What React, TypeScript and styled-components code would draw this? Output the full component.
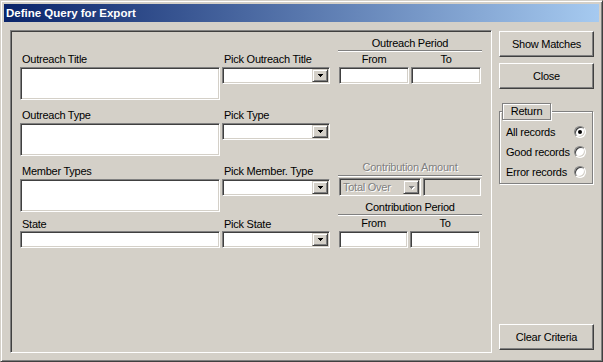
import { Fragment } from 'react';
import styled, { createGlobalStyle } from 'styled-components';

const GlobalStyle = createGlobalStyle`
  body {
    margin: 0;
    background: #d4d0c8;
    font-family: 'Liberation Sans', Arial, sans-serif;
    font-size: 11px;
    letter-spacing: -0.25px;
    color: #000;
  }
`;

const Window = styled.div`
  width: 603px;
  height: 362px;
  box-sizing: border-box;
  display: flex;
  flex-direction: column;
  background: #d4d0c8;
  border: 1px solid;
  border-color: #d4d0c8 #404040 #404040 #d4d0c8;
  box-shadow: inset 1px 1px #fff, inset -1px -1px #808080;
  padding: 3px;
`;

const TitleBar = styled.div`
  height: 18px;
  line-height: 18px;
  padding-left: 2px;
  background: linear-gradient(to right, #0a246a, #a6caf0);
  color: #fff;
  font-weight: bold;
  font-size: 11.5px;
  letter-spacing: 0;
`;

const Body = styled.div`
  flex: 1;
  display: flex;
  padding: 8px 4px 5px 6px;
`;

const Panel = styled.div`
  width: 482px;
  box-sizing: border-box;
  display: flex;
  align-items: flex-start;
  padding: 5px 0 0 9px;
  border: 1px solid;
  border-color: #808080 #fff #fff #808080;
  box-shadow: inset 1px 1px #404040, inset -1px -1px #d4d0c8;
`;

const FieldGrid = styled.div`
  display: grid;
  grid-template-columns: 200px 108px;
  grid-template-rows: 56px 56px 53px auto;
  column-gap: 2px;
  padding-top: 16px;
`;

const Cell = styled.div`
  display: flex;
  flex-direction: column;
`;

const Label = styled.div<{ $tight?: boolean }>`
  height: 14px;
  line-height: 14px;
  padding-left: 2px;
  margin-bottom: ${(p) => (p.$tight ? 0 : 1)}px;
  white-space: nowrap;
`;

const Sunken = styled.div<{ $h: number; $w?: number; $disabled?: boolean }>`
  box-sizing: border-box;
  height: ${(p) => p.$h}px;
  width: ${(p) => (p.$w ? `${p.$w}px` : 'auto')};
  padding: 1px;
  display: flex;
  justify-content: flex-end;
  align-items: stretch;
  background: ${(p) => (p.$disabled ? '#d4d0c8' : '#fff')};
  border: 1px solid;
  border-color: #808080 #fff #fff #808080;
  box-shadow: inset 1px 1px #404040, inset -1px -1px #d4d0c8;
`;

const DropButton = styled.div<{ $disabled?: boolean }>`
  width: 16px;
  box-sizing: border-box;
  display: flex;
  align-items: center;
  justify-content: center;
  background: #d4d0c8;
  border: 1px solid;
  border-color: #d4d0c8 #404040 #404040 #d4d0c8;
  box-shadow: inset 1px 1px #fff, inset -1px -1px #808080;
  color: ${(p) => (p.$disabled ? '#808080' : '#000')};
  svg {
    filter: ${(p) => (p.$disabled ? 'drop-shadow(1px 1px 0 #fff)' : 'none')};
  }
`;

const ComboText = styled.div`
  flex: 1;
  padding-left: 2px;
  line-height: 14px;
  color: #808080;
  text-shadow: 1px 1px 0 #fff;
`;

const Arrow = () => (
  <svg width="5" height="3" viewBox="0 0 5 3" shapeRendering="crispEdges">
    <path d="M0 0h5v1h-1v1h-1v1h-1v-1h-1v-1h-1z" fill="currentColor" />
  </svg>
);

const Combo = ({ w, h = 17, text, disabled }: { w?: number; h?: number; text?: string; disabled?: boolean }) => (
  <Sunken $h={h} $w={w} $disabled={disabled}>
    {text && <ComboText>{text}</ComboText>}
    <DropButton $disabled={disabled}>
      <Arrow />
    </DropButton>
  </Sunken>
);

const Periods = styled.div`
  width: 144px;
  margin-left: 8px;
  display: flex;
  flex-direction: column;
`;

const SectionHead = styled.div<{ $top: number; $h?: number; $disabled?: boolean }>`
  margin-top: ${(p) => p.$top}px;
  height: ${(p) => p.$h ?? 14}px;
  line-height: 14px;
  text-align: center;
  border-bottom: 1px solid #808080;
  box-shadow: 0 1px #fff;
  color: ${(p) => (p.$disabled ? '#808080' : '#000')};
  text-shadow: ${(p) => (p.$disabled ? '1px 1px 0 #fff' : 'none')};
`;

const PairRow = styled.div<{ $top: number; $cols: string }>`
  display: grid;
  grid-template-columns: ${(p) => p.$cols};
  column-gap: 2px;
  margin-top: ${(p) => p.$top}px;
  padding-left: 1px;
`;

const SubLabel = styled.div`
  height: 14px;
  line-height: 14px;
  text-align: center;
`;

const Side = styled.div`
  width: 95px;
  margin-left: 7px;
  display: flex;
  flex-direction: column;
  padding: 1px 0 3px;
`;

const Button = styled.div<{ $top?: number; $auto?: boolean }>`
  height: 26px;
  box-sizing: border-box;
  display: flex;
  align-items: center;
  justify-content: center;
  margin-top: ${(p) => (p.$auto ? 'auto' : `${p.$top ?? 0}px`)};
  border: 1px solid;
  border-color: #fff #404040 #404040 #fff;
  box-shadow: inset -1px -1px #808080;
`;

const Group = styled.div`
  position: relative;
  margin-top: 22px;
  width: 94px;
  height: 73px;
  box-sizing: border-box;
  padding: 10px 6px 0 6px;
  border: 1px solid #808080;
  box-shadow: inset 1px 1px #fff, 1px 1px #fff;
`;

const Legend = styled.div`
  position: absolute;
  top: -9px;
  left: 2px;
  width: 47px;
  height: 15px;
  line-height: 15px;
  text-align: center;
  background: #d4d0c8;
  border: 1px solid #808080;
  box-shadow: inset 1px 1px #fff, 1px 1px #fff;
`;

const RadioRow = styled.div`
  height: 20px;
  display: flex;
  align-items: center;
  justify-content: space-between;
  white-space: nowrap;
`;

const Radio = styled.div<{ $on?: boolean }>`
  width: 12px;
  height: 12px;
  box-sizing: border-box;
  flex-shrink: 0;
  border-radius: 50%;
  background: #fff;
  border: 1px solid;
  border-color: #808080 #fff #fff #808080;
  box-shadow: inset 1px 1px #404040, inset -1px -1px #d4d0c8;
  display: flex;
  align-items: center;
  justify-content: center;
  &::after {
    content: '';
    width: 4px;
    height: 4px;
    border-radius: 50%;
    background: ${(p) => (p.$on ? '#000' : 'transparent')};
  }
`;

const rows = [
  { label: 'Outreach Title', pick: 'Pick Outreach Title' },
  { label: 'Outreach Type', pick: 'Pick Type' },
  { label: 'Member Types', pick: 'Pick Member. Type' },
];

export default function App() {
  return (
    <>
      <GlobalStyle />
      <Window>
        <TitleBar>Define Query for Export</TitleBar>
        <Body>
          <Panel>
            <FieldGrid>
              {rows.map((r) => (
                <Fragment key={r.label}>
                  <Cell>
                    <Label>{r.label}</Label>
                    <Sunken $h={33} />
                  </Cell>
                  <Cell>
                    <Label>{r.pick}</Label>
                    <Combo />
                  </Cell>
                </Fragment>
              ))}
              <Cell>
                <Label $tight>State</Label>
                <Sunken $h={17} />
              </Cell>
              <Cell>
                <Label $tight>Pick State</Label>
                <Combo />
              </Cell>
            </FieldGrid>
            <Periods>
              <SectionHead $top={0}>Outreach Period</SectionHead>
              <PairRow $top={1} $cols="70px 70px">
                <SubLabel>From</SubLabel>
                <SubLabel>To</SubLabel>
              </PairRow>
              <PairRow $top={1} $cols="70px 70px">
                <Sunken $h={17} />
                <Sunken $h={17} />
              </PairRow>
              <SectionHead $top={76} $h={15} $disabled>
                Contribution Amount
              </SectionHead>
              <PairRow $top={2} $cols="82px 58px">
                <Combo h={18} text="Total Over" disabled />
                <Sunken $h={18} $disabled />
              </PairRow>
              <SectionHead $top={4}>Contribution Period</SectionHead>
              <PairRow $top={1} $cols="69px 70px">
                <SubLabel>From</SubLabel>
                <SubLabel>To</SubLabel>
              </PairRow>
              <PairRow $top={1} $cols="69px 70px">
                <Sunken $h={17} />
                <Sunken $h={17} />
              </PairRow>
            </Periods>
          </Panel>
          <Side>
            <Button>Show Matches</Button>
            <Button $top={6}>Close</Button>
            <Group>
              <Legend>Return</Legend>
              <RadioRow>
                All records <Radio $on />
              </RadioRow>
              <RadioRow>
                Good records <Radio />
              </RadioRow>
              <RadioRow>
                Error records <Radio />
              </RadioRow>
            </Group>
            <Button $auto>Clear Criteria</Button>
          </Side>
        </Body>
      </Window>
    </>
  );
}
